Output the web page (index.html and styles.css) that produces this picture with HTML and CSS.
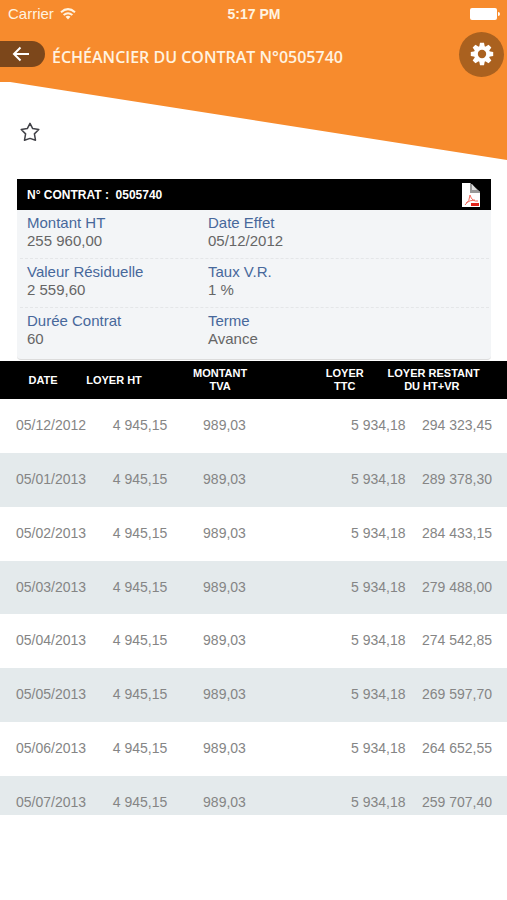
FILE: index.html
```html
<!DOCTYPE html>
<html lang="fr">
<head>
<meta charset="utf-8">
<meta name="viewport" content="width=device-width, initial-scale=1">
<title>Échéancier du contrat</title>
<link rel="stylesheet" href="styles.css">
</head>
<body>
<header class="banner">
  <div class="status">
    <span class="carrier">Carrier
      <svg width="16" height="12" viewBox="0 0 16 12" aria-hidden="true"><g fill="none" stroke="#fff3e0" stroke-width="2"><path d="M1 4.2Q8-2 15 4.2"/><path d="M3.6 7.1Q8 3.4 12.4 7.1"/></g><path d="M5.5 8.8Q8 6.900 10.500 8.800L8 11.500Z" fill="#fff3e0"/></svg>
    </span>
    <span class="time">5:17 PM</span>
    <svg class="battery" width="30" height="12" viewBox="0 0 30 12" aria-hidden="true"><rect width="27" height="12" rx="2" fill="#fff"/><path d="M28 4Q30 4 30 6T28 8Z" fill="#fff"/></svg>
  </div>
  <div class="titlebar">
    <button class="back" aria-label="Retour"><svg width="18" height="16" viewBox="0 0 18 16"><path d="M17 8H2M8.500 1.500L2 8L8.500 14.500" fill="none" stroke="#fff" stroke-width="2"/></svg></button>
    <h1>ÉCHÉANCIER DU CONTRAT N°0505740</h1>
    <button class="settings" aria-label="Paramètres"><svg width="24" height="24" viewBox="-12 -12 24 24"><g fill="#fff"><path id="tooth" d="M-2.800 -7L-2 -11.200H2L2.800 -7V7L2 11.200H-2L-2.800 7Z"/><use href="#tooth" transform="rotate(45)"/><use href="#tooth" transform="rotate(90)"/><use href="#tooth" transform="rotate(135)"/><circle r="8"/></g><circle r="4.200" fill="#aa611f"/></svg></button>
  </div>
  <button class="favorite" aria-label="Favori"><svg width="20" height="20" viewBox="0 0 20 20"><path d="M10 1.300L12.700 6.600L18.800 7.500L14.400 11.900L15.500 18.200L10 16.400L4.500 18.200L5.600 11.900L1.200 7.500L7.300 6.600Z" fill="none" stroke="#414248" stroke-width="1.500" stroke-linejoin="round"/></svg></button>
</header>
<main>
  <section class="card">
    <div class="card-head">
      <h2>N° CONTRAT :&nbsp; 0505740</h2>
      <button class="pdf" aria-label="PDF"><svg width="20" height="26" viewBox="0 0 20 26"><path d="M1 1H9L19 10V25H1Z" fill="#fff"/><path d="M9 1L19 10V11H9Z" fill="#999"/><path d="M11 2L16 8H11Z" fill="#ddd"/><path d="M4 23Q9 19 9 13Q11 20 17 19M5 21Q9 18 14 18" fill="none" stroke="#f26b60" stroke-width="1"/><rect x="10" y="21" width="8" height="3" fill="#e2231a"/></svg></button>
    </div>
    <dl class="details">
      <div class="line"><div><dt>Montant HT</dt><dd>255 960,00</dd></div><div><dt>Date Effet</dt><dd>05/12/2012</dd></div></div>
      <div class="line"><div><dt>Valeur Résiduelle</dt><dd>2 559,60</dd></div><div><dt>Taux V.R.</dt><dd>1 %</dd></div></div>
      <div class="line"><div><dt>Durée Contrat</dt><dd>60</dd></div><div><dt>Terme</dt><dd>Avance</dd></div></div>
    </dl>
  </section>
  <div class="schedule">
    <table>
      <thead><tr><th class="date">DATE</th><th class="ht">LOYER HT</th><th class="tva">MONTANT<br>TVA</th><th class="ttc">LOYER<br>TTC</th><th class="rest"><div>LOYER RESTANT<br>DU HT+VR</div></th></tr></thead>
      <tbody>
        <tr><td>05/12/2012</td><td>4 945,15</td><td>989,03</td><td>5 934,18</td><td>294 323,45</td></tr>
        <tr><td>05/01/2013</td><td>4 945,15</td><td>989,03</td><td>5 934,18</td><td>289 378,30</td></tr>
        <tr><td>05/02/2013</td><td>4 945,15</td><td>989,03</td><td>5 934,18</td><td>284 433,15</td></tr>
        <tr><td>05/03/2013</td><td>4 945,15</td><td>989,03</td><td>5 934,18</td><td>279 488,00</td></tr>
        <tr><td>05/04/2013</td><td>4 945,15</td><td>989,03</td><td>5 934,18</td><td>274 542,85</td></tr>
        <tr><td>05/05/2013</td><td>4 945,15</td><td>989,03</td><td>5 934,18</td><td>269 597,70</td></tr>
        <tr><td>05/06/2013</td><td>4 945,15</td><td>989,03</td><td>5 934,18</td><td>264 652,55</td></tr>
        <tr><td>05/07/2013</td><td>4 945,15</td><td>989,03</td><td>5 934,18</td><td>259 707,40</td></tr>
      </tbody>
    </table>
  </div>
</main>
</body>
</html>
```
FILE: styles.css
```css
* { box-sizing: border-box; }
body {
  margin: 0;
  height: 100vh;
  display: flex;
  flex-direction: column;
  padding-bottom: 85px;
  background: #fff;
  font-family: "Liberation Sans", Arial, sans-serif;
}
h1, h2, dl, dd { margin: 0; }
button { border: 0; padding: 0; background: none; display: flex; align-items: center; justify-content: center; cursor: pointer; }
svg { display: block; }

.banner { position: relative; padding-bottom: 37px; }
.banner::before {
  content: "";
  position: absolute;
  inset: 0 0 auto;
  height: 160px;
  z-index: -1;
  background: #f78b2d;
  clip-path: polygon(0 0, 100% 0, 100% 100%, 2% 82px, 0 82px);
}
.status {
  display: grid;
  grid-template-columns: 1fr auto 1fr;
  align-items: center;
  height: 28px;
  padding: 0 7px 0 8px;
  color: #fff3e0;
  font-size: 14px;
}
.carrier { display: flex; align-items: center; gap: 6px; font-size: 15px; line-height: 16px; }
.time { font-weight: bold; }
.battery { justify-self: end; }
.titlebar { display: flex; align-items: center; height: 52px; padding-right: 3px; }
.back { width: 45px; height: 26px; padding-right: 4px; border-radius: 0 13px 13px 0; background: #7c471b; }
h1 {
  flex: 1;
  padding: 6px 0 0 7px;
  color: #fff3e0;
  font: 600 16px/22px "Open Sans", "Noto Sans", sans-serif;
  white-space: nowrap;
}
.settings { width: 45px; height: 45px; border-radius: 50%; background: #aa611f; }
.favorite { margin: 42px 0 0 20px; }

main { flex: 1; min-height: 0; display: flex; flex-direction: column; }
.card { margin: 0 16px 1px 17px; border-radius: 0 0 4px 4px; background: #f3f5f7; border-bottom: 1px solid #dcdcdc; }
.card-head { display: flex; align-items: center; justify-content: space-between; height: 31px; padding: 0 10px; background: #000; }
h2 { color: #fff; font-size: 12px; }
.details { padding: 0 2px 0 3px; font-size: 15px; line-height: 18px; }
.line { display: grid; grid-template-columns: 181fr 281fr; height: 49px; padding: 4px 0 0 7px; border-bottom: 1px dashed #e4e6e8; }
.line:last-child { height: 51px; border-bottom: 0; }
dt { color: #47689b; }
dd { color: #666; }

.schedule { flex: 1; min-height: 0; overflow: hidden; }
table { width: 100%; table-layout: fixed; border-collapse: collapse; }
th { height: 38px; padding: 0; background: #000; color: #fff; font-size: 11px; line-height: 13px; white-space: nowrap; }
.date { width: 17%; }
.ht { width: 16%; text-align: left; }
.tva { width: 23%; padding-right: 11px; }
.ttc { width: 24%; }
.rest { width: 20%; }
.rest div { margin: 0 31px 0 -18px; }
td { height: 54px; padding: 0 0 2px; color: #858585; font-size: 14px; text-align: right; white-space: nowrap; }
td:first-child { text-align: left; padding-left: 16px; }
td:nth-child(3) { padding-right: 38px; }
td:last-child { padding-right: 15px; }
tbody tr:nth-child(even) { background: #e4eaec; }
tbody tr:nth-child(4n) td { height: 53px; }
```
